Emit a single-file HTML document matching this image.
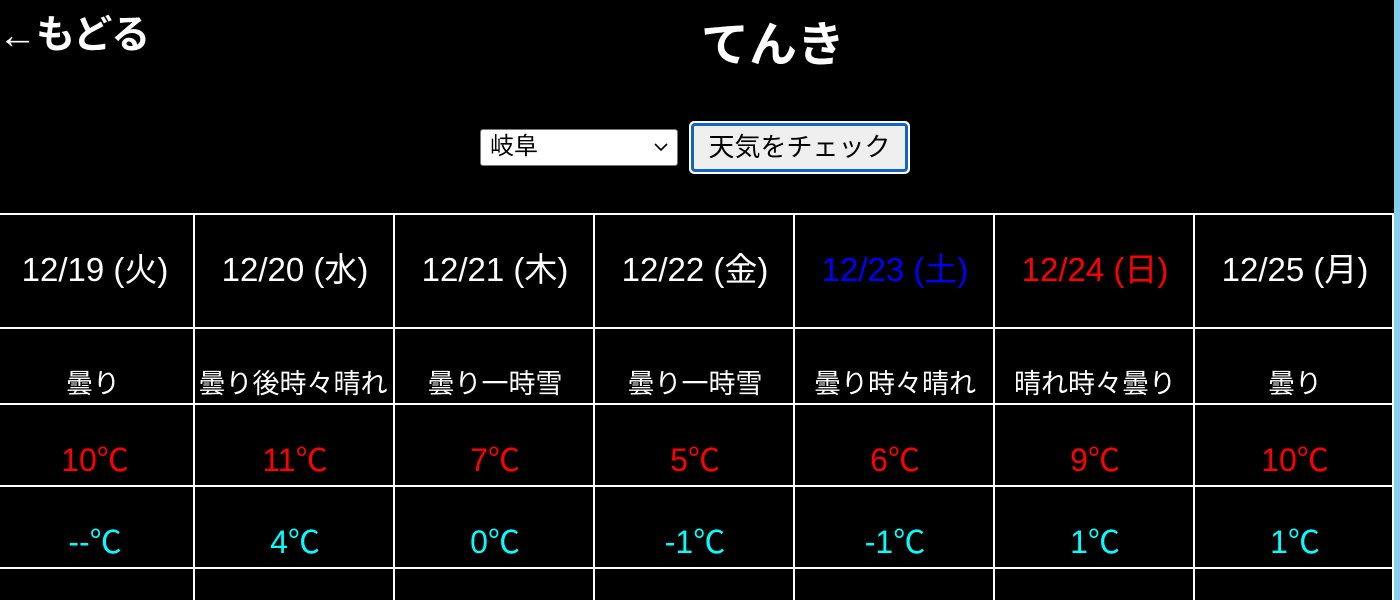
<!DOCTYPE html>
<html><head><meta charset="utf-8"><style>
*{margin:0;padding:0;box-sizing:border-box}
body{width:1400px;height:600px;background:#000;overflow:hidden;position:relative;font-family:"Liberation Sans","Noto Sans CJK JP",sans-serif;color:#fff}
.abs{position:absolute}
.h{background:#fff;height:2px;left:0;width:1393px}
.v{background:#fff;width:2px;top:213px;height:387px}
.c{position:absolute;width:198px;text-align:center;white-space:nowrap;line-height:40px}
.d{font-size:33px;top:250px}
.w{font-size:27px;top:362px;font-family:"Noto Sans CJK JP",sans-serif}
.t{font-size:32px;top:440px;color:#ff0000}
.l{font-size:32px;top:522px;color:#00ffff}
</style></head><body>
<div class="abs" style="right:0;top:0;width:6px;height:600px;background:#87ceeb"></div>
<div class="abs" style="left:-2px;top:12px;font-size:39px;font-weight:bold;line-height:48px;letter-spacing:-1px">←もどる</div>
<div class="abs" style="left:0;width:1546px;top:16px;text-align:center;font-size:48px;font-weight:bold;line-height:60px">てんき</div>
<div class="abs" style="left:480px;top:129px;width:198px;height:37px;background:#fff;border:1px solid #777;border-radius:3px;color:#000;font-size:24px;line-height:34px;padding-left:9px">岐阜
<svg class="abs" style="right:9px;top:13px" width="14" height="9" viewBox="0 0 14 9"><path d="M1 1L7 7L13 1" stroke="#000" stroke-width="1.6" fill="none"/></svg></div>
<div class="abs" style="left:689px;top:121px;width:221px;height:53px;background:#fff;border-radius:5px;padding:2px"><div style="width:217px;height:49px;border:3px solid #1565c0;border-radius:4px;background:#efefef;color:#000;font-size:26px;line-height:42px;text-align:center">天気をチェック</div></div>
<div class="abs h" style="top:213px"></div>
<div class="abs h" style="top:327px"></div>
<div class="abs h" style="top:403px"></div>
<div class="abs h" style="top:485px"></div>
<div class="abs h" style="top:567px"></div>
<div class="abs v" style="left:193px"></div><div class="abs v" style="left:393px"></div><div class="abs v" style="left:593px"></div><div class="abs v" style="left:793px"></div><div class="abs v" style="left:993px"></div><div class="abs v" style="left:1193px"></div><div class="abs v" style="left:1392px"></div>
<div class="c d" style="left:-4px">12/19 (火)</div>
<div class="c d" style="left:196px">12/20 (水)</div>
<div class="c d" style="left:396px">12/21 (木)</div>
<div class="c d" style="left:596px">12/22 (金)</div>
<div class="c d" style="left:796px;color:#0000ff">12/23 (土)</div>
<div class="c d" style="left:996px;color:#ff0000">12/24 (日)</div>
<div class="c d" style="left:1196px">12/25 (月)</div>
<div class="c w" style="left:-6px">曇り</div>
<div class="c w" style="left:194px">曇り後時々晴れ</div>
<div class="c w" style="left:396px">曇り一時雪</div>
<div class="c w" style="left:596px">曇り一時雪</div>
<div class="c w" style="left:796px">曇り時々晴れ</div>
<div class="c w" style="left:996px">晴れ時々曇り</div>
<div class="c w" style="left:1196px">曇り</div>
<div class="c t" style="left:-4px">10℃</div>
<div class="c t" style="left:196px">11℃</div>
<div class="c t" style="left:396px">7℃</div>
<div class="c t" style="left:596px">5℃</div>
<div class="c t" style="left:796px">6℃</div>
<div class="c t" style="left:996px">9℃</div>
<div class="c t" style="left:1196px">10℃</div>
<div class="c l" style="left:-4px">--℃</div>
<div class="c l" style="left:196px">4℃</div>
<div class="c l" style="left:396px">0℃</div>
<div class="c l" style="left:596px">-1℃</div>
<div class="c l" style="left:796px">-1℃</div>
<div class="c l" style="left:996px">1℃</div>
<div class="c l" style="left:1196px">1℃</div>
</body></html>
